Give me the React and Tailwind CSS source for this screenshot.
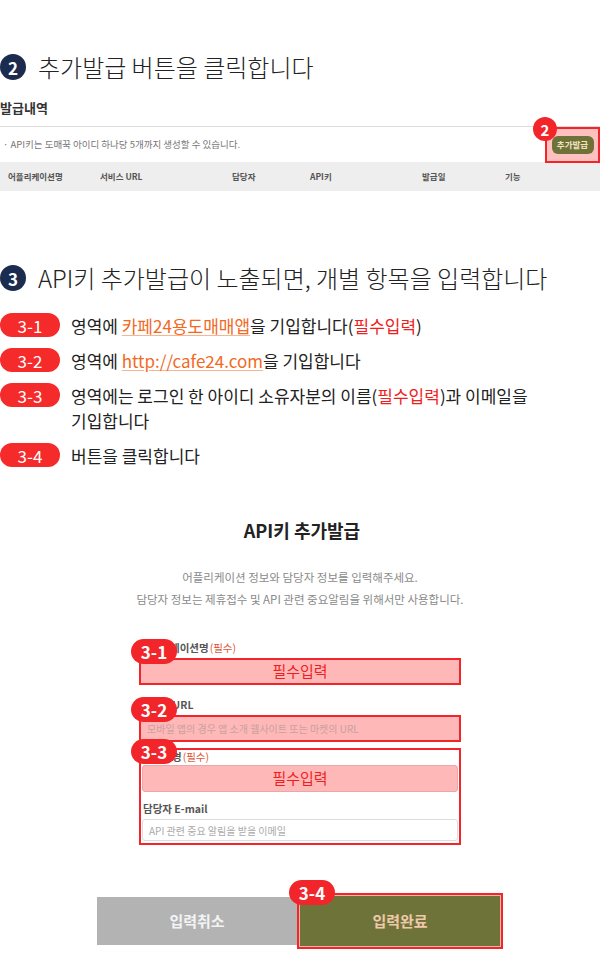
import React from 'react';

const font = { fontFamily: '"Noto Sans CJK KR", "Noto Sans", sans-serif' };

const StepCircle = ({ n }) => (
  <span className="flex h-[26px] min-w-[26px] items-center justify-center rounded-full bg-[#1b2c4e] text-[17px] font-bold leading-none text-white">
    {n}
  </span>
);

const Pill = ({ children }) => (
  <span className="flex h-[24px] w-[60px] shrink-0 items-center justify-center rounded-full bg-[#f52a2a] text-[17px] leading-none text-white">
    {children}
  </span>
);

const Tag = ({ children, className = '' }) => (
  <span
    className={`absolute flex h-[25px] w-[46px] items-center justify-center rounded-full bg-[#f2262a] text-[17px] font-bold leading-none text-white ${className}`}
  >
    {children}
  </span>
);

const Required = () => <span className="ml-[1px] font-normal text-[#e0573e]">(필수)</span>;

const App = () => {
  const cols = [
    ['어플리케이션명', 'w-[100px] pl-[8px]'],
    ['서비스 URL', 'w-[132px]'],
    ['담당자', 'w-[78px]'],
    ['API키', 'w-[112px]'],
    ['발급일', 'w-[83px]'],
    ['기능', ''],
  ];

  return (
    <div className="min-h-[961px] w-[600px] bg-white text-[#222]" style={font}>
      {/* step 2 */}
      <div className="flex items-center gap-[12px] pt-[54px]">
        <StepCircle n="2" />
        <h2 className="text-[24px] font-light leading-[26px] text-[#222]">추가발급 버튼을 클릭합니다</h2>
      </div>

      <div className="mt-[20px] text-[13px] font-bold leading-[16px] text-[#333]">발급내역</div>

      <div className="mt-[10px] border-t border-[#dcdcdc]">
        <div className="relative flex h-[35px] items-center justify-between">
          <span className="pl-[3px] text-[9.5px] text-[#777]">· API키는 도매꾹 아이디 하나당 5개까지 생성할 수 있습니다.</span>
          <div className="flex h-[36px] w-[55px] items-center justify-center border-2 border-[#f2262a] bg-[#ffc0c0]">
            <span className="flex h-[18px] w-[42px] items-center justify-center rounded-[6px] bg-[#6e7238] text-[8.5px] font-bold text-[#f3e2c2]">
              추가발급
            </span>
          </div>
          <span className="absolute right-[43px] top-[-10px] flex h-[24px] w-[24px] items-center justify-center rounded-full bg-[#f2262a] text-[15px] font-bold leading-none text-white">
            2
          </span>
        </div>
        <div className="flex h-[29px] items-center bg-[#eeeeee] text-[8.5px] font-bold text-[#555]">
          {cols.map(([c, w]) => (
            <span key={c} className={w}>
              {c}
            </span>
          ))}
        </div>
      </div>

      {/* step 3 */}
      <div className="mt-[74px] flex items-center gap-[12px]">
        <StepCircle n="3" />
        <h2 className="text-[24px] font-light leading-[26px] text-[#222]">API키 추가발급이 노출되면, 개별 항목을 입력합니다</h2>
      </div>

      <ul className="mt-[22px] flex flex-col gap-[10px] text-[17px] leading-[25px] text-[#222]">
        <li className="flex items-start gap-[11px]">
          <Pill>3-1</Pill>
          <span>
            영역에{' '}
            <span className="text-[#f2691f] underline decoration-[#f8b58f] underline-offset-2">카페24용도매매앱</span>을 기입합니다(
            <span className="text-[#f01e1e]">필수입력</span>)
          </span>
        </li>
        <li className="flex items-start gap-[11px]">
          <Pill>3-2</Pill>
          <span>
            영역에{' '}
            <span className="text-[#f2691f] underline decoration-[#f8b58f] underline-offset-2">http://cafe24.com</span>을 기입합니다
          </span>
        </li>
        <li className="flex items-start gap-[11px]">
          <Pill>3-3</Pill>
          <span>
            영역에는 로그인 한 아이디 소유자분의 이름(<span className="text-[#f01e1e]">필수입력</span>)과 이메일을
            <br />
            기입합니다
          </span>
        </li>
        <li className="flex items-start gap-[11px]">
          <Pill>3-4</Pill>
          <span>버튼을 클릭합니다</span>
        </li>
      </ul>

      {/* form */}
      <div className="mt-[50px] flex flex-col items-center">
        <h3 className="pl-[4px] text-[18px] font-bold leading-[24px] text-[#222]">API키 추가발급</h3>
        <p className="mt-[24px] text-center text-[11.5px] leading-[22px] text-[#8a8a8a]">
          어플리케이션 정보와 담당자 정보를 입력해주세요.
          <br />
          담당자 정보는 제휴접수 및 API 관련 중요알림을 위해서만 사용합니다.
        </p>

        <div className="mt-[31px] flex w-[322px] flex-col text-[10.5px]">
          <div className="relative">
            <div className="pl-[2px] font-bold leading-[14px] text-[#555]">
              어플리케이션명<Required />
            </div>
            <div className="mt-[3px] flex h-[27px] items-center justify-center border-2 border-[#f2262a] bg-[#ffb8b8] text-[15px] text-[#f01e1e]">
              필수입력
            </div>
            <Tag className="left-[-8px] top-[-2px]">3-1</Tag>
          </div>

          <div className="relative mt-[13px]">
            <div className="pl-[2px] font-bold leading-[14px] text-[#555]">서비스 URL</div>
            <div className="mt-[3px] flex h-[27px] items-center border-2 border-[#f2262a] bg-[#ffb8b8] pl-[6px] text-[10px] text-[#c9a0a0]">
              모바일 앱의 경우 앱 소개 웹사이트 또는 마켓의 URL
            </div>
            <Tag className="left-[-8px] top-[-1px]">3-2</Tag>
          </div>

          <div className="relative mt-[6px] border-2 border-[#f2262a] px-[1px] pb-[2px]">
            <div className="pl-[1px] font-bold leading-[14px] text-[#555]">
              담당자명<Required />
            </div>
            <div className="mt-[1px] flex h-[27px] items-center justify-center rounded-[3px] border border-[#e8a8a8] bg-[#ffb8b8] text-[15px] text-[#f01e1e]">
              필수입력
            </div>
            <div className="mt-[10px] pl-[1px] font-bold leading-[14px] text-[#555]">담당자 E-mail</div>
            <div className="mt-[3px] flex h-[22px] items-center rounded-[3px] border border-[#ddd] bg-white pl-[6px] text-[10px] text-[#aaa]">
              API 관련 중요 알림을 받을 이메일
            </div>
            <Tag className="left-[-10px] top-[-11px]">3-3</Tag>
          </div>
        </div>

        <div className="mt-[48px] flex items-center">
          <button className="flex h-[48px] w-[200px] items-center justify-center bg-[#b3b3b3] text-[15px] font-bold text-[#f3f3f3]">
            입력취소
          </button>
          <div className="relative border-2 border-[#f2262a]">
            <button className="flex h-[52px] w-[202px] items-center justify-center border border-[#f0b4a8] bg-[#6e733a] text-[15px] font-bold text-[#efc9a9]">
              입력완료
            </button>
            <Tag className="left-[-10px] top-[-15px]">3-4</Tag>
          </div>
        </div>
      </div>
    </div>
  );
};

export default App;
